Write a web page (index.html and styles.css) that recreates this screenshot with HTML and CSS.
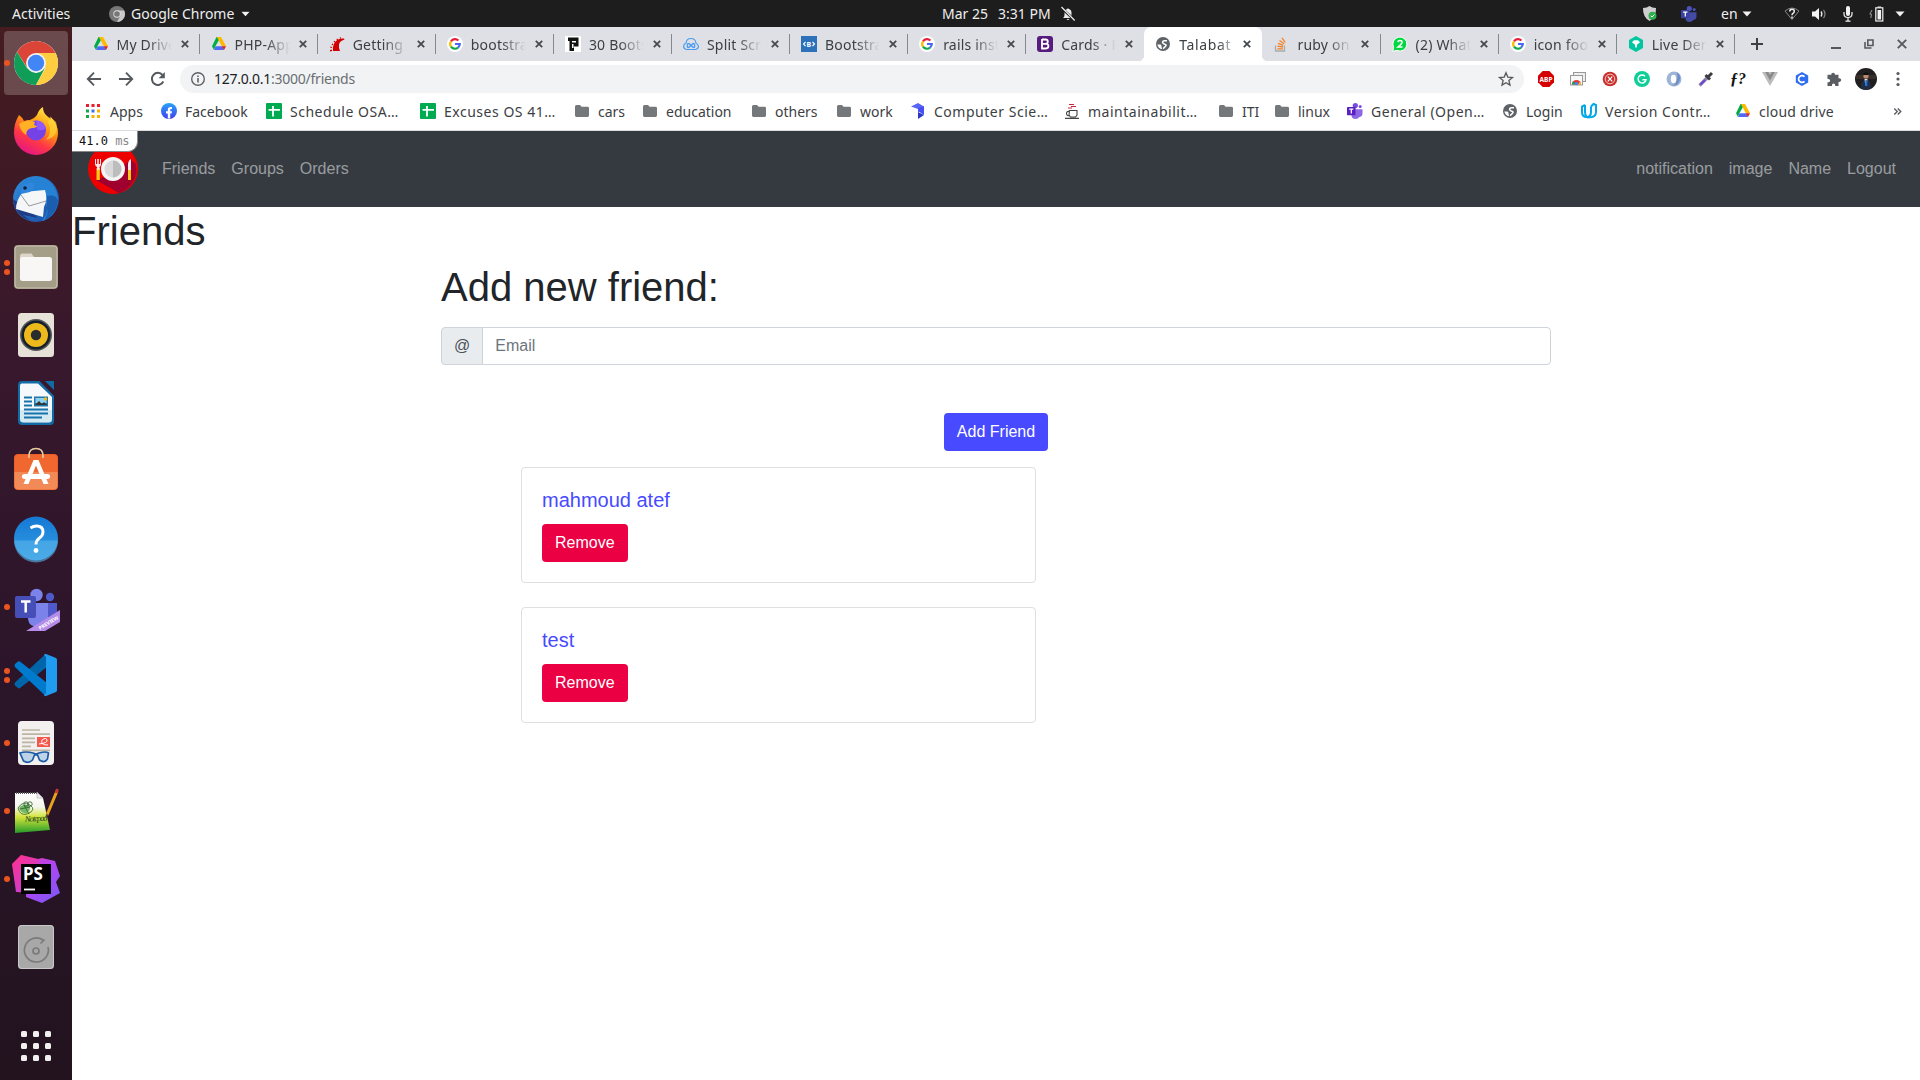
FILE: index.html
```html
<!DOCTYPE html>
<html lang="en">
<head>
<meta charset="utf-8">
<title>Talabat</title>
<link rel="stylesheet" href="styles.css">
</head>
<body>
<svg class="defs" width="0" height="0" aria-hidden="true">
  <defs>
    <linearGradient id="ffG" x1="0.8" y1="0" x2="0.3" y2="1"><stop offset="0" stop-color="#fff44f"/><stop offset=".4" stop-color="#ff980e"/><stop offset=".7" stop-color="#ff3647"/><stop offset="1" stop-color="#e31587"/></linearGradient>
    <linearGradient id="tbG" x1="0" y1="0" x2="1" y2="1"><stop offset="0" stop-color="#2f8fe0"/><stop offset="1" stop-color="#1b4aa0"/></linearGradient>
    <linearGradient id="helpG" x1="0" y1="0" x2="0" y2="1"><stop offset="0" stop-color="#1478d4"/><stop offset="1" stop-color="#35a0e4"/></linearGradient>
    <linearGradient id="psG" x1="0" y1="0" x2="1" y2="1"><stop offset="0" stop-color="#ff318c"/><stop offset=".5" stop-color="#b345f1"/><stop offset="1" stop-color="#765af8"/></linearGradient>
    <linearGradient id="grassG" x1="0" y1="0" x2="0" y2="1"><stop offset="0" stop-color="#fff"/><stop offset=".35" stop-color="#f4f6ec"/><stop offset=".6" stop-color="#d3e53a"/><stop offset="1" stop-color="#259b2a"/></linearGradient>
    <linearGradient id="fbG" x1="0" y1="0" x2="0" y2="1"><stop offset="0" stop-color="#2aa4f8"/><stop offset="1" stop-color="#3f3fee"/></linearGradient>
  </defs>
  <symbol id="drive" viewBox="0 0 16 16"><path fill="#00ac47" d="M5.5 1h4.2L4.4 10.2 3 14 1 10.3z"/><path fill="#ffba00" d="M6 1h4l5 9h-4.300z"/><path fill="#4f6cf7" d="M4.600 10.200h6.800L13 14H3z"/><path fill="#ea1d1d" d="M10.800 10.200H15L13 14z"/></symbol>
  <symbol id="google" viewBox="0 0 16 16"><circle cx="8" cy="8" r="8" fill="#fff"/><g fill="none" stroke-width="2.200"><path stroke="#ea1d3a" d="M4 5.300A4.800 4.800 0 0 1 11.400 4.600"/><path stroke="#fbbc05" d="M4 5.300a4.800 4.800 0 0 0 0 5.400"/><path stroke="#0faa45" d="M4 10.700a4.800 4.800 0 0 0 7 .9"/><path stroke="#4768f5" d="M8 8h4.800a4.800 4.800 0 0 1-1.800 3.600"/></g></symbol>
  <symbol id="globe" viewBox="0 0 16 16"><circle cx="8" cy="8" r="7" fill="#5f6368"/><path d="M12 4.800H9.500Q7.500 5 7.600 6.400T9.800 8.200 10.500 10.300 8 12.600" fill="none" stroke="#fff" stroke-width="1.500"/><path fill="#fff" d="M2.300 8.600h3.200q1.200.5 1 1.800l.6 2.800Q3.300 12.800 2.300 8.600z"/></symbol>
  <symbol id="close" viewBox="0 0 8 8"><path d="M.8.8l6.400 6.400M7.200.8L.8 7.200" stroke="#45494d" stroke-width="1.800"/></symbol>
  <symbol id="folder" viewBox="0 0 16 16"><path fill="#75787b" d="M1 3.500Q1 2 2.500 2H6l1.600 1.800h6q1.400 0 1.400 1.400v7.400q0 1.400-1.400 1.400H2.400Q1 14 1 12.600z"/></symbol>
  <symbol id="sheet" viewBox="0 0 16 16"><rect width="16" height="16" rx="1" fill="#00aa50"/><path d="M7 3v10.500M2.500 6.800h11.500" stroke="#fff" stroke-width="1.800"/></symbol>
  <symbol id="teams" viewBox="0 0 16 16"><circle cx="8.300" cy="2.600" r="2.600"/><circle cx="13.200" cy="3.500" r="1.500"/><path d="M6 6.200h9.500v4.300q0 3-3 3.500Q11 16 8.500 16 4.500 16 4.500 12z" opacity=".85"/><rect y="4" width="8.500" height="8.200" rx=".8" class="tm-box"/><path d="M2.200 6.200h4.200M4.300 6.200v4.300" stroke="#fff" stroke-width="1.200"/></symbol>
  <symbol id="caret" viewBox="0 0 10 6"><path d="M.5.500h9L5 5.500z" fill="#f2f2f2"/></symbol>
</svg>

<header class="topbar">
  <span class="tb-activities">Activities</span>
  <svg class="tb-app-icon" viewBox="0 0 16 16"><circle cx="8" cy="8" r="8" fill="#777"/><path fill="#c9c9c9" d="M8 4.500h7.200A8 8 0 0 1 8 16l3.300-6z"/><circle cx="8" cy="8" r="3.700" fill="#ddd"/><circle cx="8" cy="8" r="2.800" fill="#777"/></svg>
  <span class="tb-app">Google Chrome</span>
  <svg class="tb-caret" viewBox="0 0 10 6"><use href="#caret"/></svg>
  <div class="clock"><span class="date">Mar 25</span><span class="time">3:31 PM</span>
    <svg width="14" height="14" viewBox="0 0 14 14"><path fill="#eee" d="M2 11q1.500-1 1.500-3V6Q3.500 2.500 6.200 2q.8-1.600 1.600 0 2.700.5 2.700 4v2q0 2 1.500 3zM5.500 12h3q-1.500 2.200-3 0z"/><path d="M0 .5l14 13" stroke="#1d1d1d" stroke-width="2.500"/><path d="M.5 0L13.700 13.500" stroke="#eee" stroke-width="1.200"/></svg>
  </div>
  <div class="tray">
    <svg class="i-shield" viewBox="0 0 14 16"><path fill="#cfcfcf" d="M6.500 0Q9 2 13 2q.3 9-6.500 13Q-.3 11 0 2q4 0 6.500-2z"/><circle cx="9.500" cy="9.800" r="4" fill="#2eb04c"/><path d="M7.800 9.800l1.300 1.300 2.200-2.500" fill="none" stroke="#fff"/></svg>
    <svg class="i-teams" viewBox="0 0 16 16"><use href="#teams"/></svg>
    <span>en</span>
    <svg class="i-caret" viewBox="0 0 10 6"><use href="#caret"/></svg>
    <svg class="i-wifi" viewBox="0 0 16 14"><path d="M7.900 12.500L1 4Q8-2 15 4z" fill="none" stroke="#888"/><path d="M5.700 4.500q0-2.300 2.300-2.300t2.300 2q0 1.300-1.300 2.100-1 .7-1 2M8 9.500v2" fill="none" stroke="#eee" stroke-width="1.500"/></svg>
    <svg class="i-vol" viewBox="0 0 15 14"><path fill="#f2f2f2" d="M0 4.500h3L7 1v12L3 9.500H0z"/><path d="M9 4.500q1.800 2.500 0 5" fill="none" stroke="#eee" stroke-width="1.300"/><path d="M11.500 2.800q3 4.200 0 8.400" fill="none" stroke="#888" stroke-width="1.200"/></svg>
    <svg class="i-mic" viewBox="0 0 10 16"><rect x="3" y="0" width="4" height="10" rx="2" fill="#f2f2f2"/><path d="M1 6v2q0 3.500 4 3.500T9 8V6M5 11.500V15M2.500 15.200h5" fill="none" stroke="#f2f2f2" stroke-width="1.200"/></svg>
    <svg class="i-bat" viewBox="0 0 15 16"><path d="M3 4L.8 8.200h1.800L1.800 12" fill="none" stroke="#999"/><rect x="6.800" y="1.800" width="7" height="13.200" fill="none" stroke="#f2f2f2" stroke-width="1.200"/><rect x="8.500" y="4" width="3.600" height="9.500" fill="#f2f2f2"/><path d="M8.500 1h3.600" stroke="#f2f2f2"/></svg>
    <svg class="i-caret last" viewBox="0 0 10 6"><use href="#caret"/></svg>
  </div>
</header>

<div class="desktop">
<nav class="dock">
  <div class="app focused"><i class="dots"><b></b></i>
    <svg viewBox="0 0 48 48"><circle cx="24" cy="24" r="22" fill="#fff"/><path fill="#db4437" d="M24 14h19.600A22 22 0 0 0 5 13l10.300 16z"/><path fill="#0f9d58" d="M5 13a22 22 0 0 0 19 33l9-17-9 5-9-5z"/><path fill="#ffcd40" d="M43.600 14H24l9.500 15L24 46a22 22 0 0 0 19.600-32z"/><circle cx="24" cy="24" r="10" fill="#f1f1f1"/><circle cx="24" cy="24" r="8.200" fill="#4285f4"/></svg></div>
  <div class="app"><svg viewBox="0 0 48 48"><path fill="url(#ffG)" d="M7 8q3 2 5 6 3-1 6-1 4-1 7-5 2-6 6-8 0 6 4 9 3 2 4 4 0-3-1-4 8 8 8 17a22 22 0 0 1-44 0Q2 16 7 8z"/><circle cx="24" cy="23.500" r="10" fill="#7542e5"/><path fill="#9059ff" d="M24 13.500q8 0 10 8-4 3-9 1z"/><path fill="#ffb024" d="M7 17q9-6 16-2l-1 3 3 1q-1 2-5 2-6 1-6 7-5-3-7-11z"/><path fill="#ffd53a" d="M36 15q5 10-2 18 14-4 10-18l-6-5z" opacity=".7"/></svg></div>
  <div class="app"><svg viewBox="0 0 48 48"><circle cx="24" cy="24" r="23" fill="url(#tbG)"/><path fill="#1f3b86" d="M1 24q2 17 18 22l-8-6 15 3-8-7z"/><path fill="#2582d5" d="M10 10Q17-2 31 3q14 5 15 23-2 16-16 20 6-8 5-14-1-11-12-15l-11 3-3-2z"/><path fill="#f5f6f8" d="M11 17l22-2q3 9-1 17L31 42 4 34q0-9 7-17z"/><path d="M9 20l8 11 17-5" fill="none" stroke="#999"/><path fill="#1b5dae" d="M35 21q9-2 11 5-1 12-14 20 5-8 3-13z"/><path fill="#2f86dc" d="M10 11q6-5 12-3 2 5-4 9l-9 2z"/><circle cx="13" cy="13" r="1.800" fill="#123"/></svg></div>
  <div class="app"><i class="dots"><b></b><b></b></i><svg viewBox="0 0 48 48"><rect x="2" y="2" width="44" height="44" rx="4" fill="#979078"/><rect x="3" y="3" width="42" height="42" rx="3" fill="#a49d88" stroke="#c7c1ae"/><path fill="#ddd6c8" d="M8 13q0-2.500 2.500-2.500h9L22 14h13v8H8z"/><rect x="8" y="14" width="32" height="24" rx="2.500" fill="#f8f7f5"/></svg></div>
  <div class="app"><svg viewBox="0 0 48 48"><rect x="6" y="2" width="36" height="44" rx="3.500" fill="#e6e2d8"/><circle cx="24" cy="24" r="16" fill="#55585a"/><circle cx="24" cy="24" r="14.500" fill="#15202b"/><circle cx="24" cy="24" r="12" fill="#edb91d"/><circle cx="24" cy="24" r="5.200" fill="#2a2d2e"/></svg></div>
  <div class="app"><svg viewBox="0 0 48 48"><path fill="#136ba5" d="M10 2h17.500L42 17v25q0 4-4 4H10q-4 0-4-4V6q0-4 4-4zM33 2h9v9z"/><path fill="#f6f9fb" d="M9.500 4.500H26L40 18v22q0 3.500-3.500 3.500h-25Q8 43.500 8 40V7q0-2.500 1.500-2.500z"/><path fill="#88c4e2" d="M8 31h32v9q0 3.500-3.500 3.500h-25Q8 43.500 8 40z" opacity=".3"/><path d="M12 18.500h8M12 22.500h8M12 26.500h8M12 30.500h24M12 34.500h24M12 38.500h18" stroke="#1674ad" stroke-width="2"/><rect x="22" y="17.500" width="14" height="10" fill="#2377a6"/><path fill="#8ed0f0" d="M23.500 19h11v5h-11z"/><path fill="#333" d="M23 26l4-4 3 3 2-2 3 3z"/><circle cx="33.500" cy="20" r="1.700" fill="#f3ba25"/></svg></div>
  <div class="app"><svg viewBox="0 0 48 48"><rect x="2" y="7" width="44" height="36" rx="4" fill="#e95420"/><rect x="2.500" y="7.500" width="43" height="35" rx="4" fill="#f0682f"/><path fill="#f28a57" d="M2.500 25h43v13.500q0 4-4 4h-35q-4 0-4-4z"/><path d="M17 11V8.500q0-7 7-7t7 7V11" fill="none" stroke="#e7cda0" stroke-width="1.600"/><path fill="#fff" d="M21.500 13h5l10 24h-5L24 18.500 16.500 37h-5z"/><rect x="10" y="27" width="28" height="5" rx="2.500" fill="#fff"/></svg></div>
  <div class="app"><svg viewBox="0 0 48 48"><circle cx="24" cy="23.500" r="22" fill="url(#helpG)"/><path fill="#5ab4eb" opacity=".6" d="M2 25.500h44a22 22 0 0 1-44 0z"/><path d="M18.500 13q3-2 6-2 6.500 0 6.500 6 0 3.500-3.800 6.200-3.200 2.300-3.200 6.300" fill="none" stroke="#fff" stroke-width="2.900"/><circle cx="24" cy="35.500" r="2.400" fill="#fff"/></svg></div>
  <div class="app"><i class="dots"><b></b></i><svg viewBox="0 0 48 48"><circle cx="24.500" cy="12" r="6.200" fill="#7b83eb"/><circle cx="38" cy="14" r="4.200" fill="#5059c9"/><path fill="#5059c9" d="M34 20h11v12q0 8-11 8z"/><path fill="#7b83eb" d="M17 20h19v15q-1 9-10 9t-10-8z"/><path fill="#b48be8" d="M14 48L48 27v12L33 48z"/><rect x="3" y="13" width="21" height="22" rx="2" fill="#464eb8"/><path d="M9 18.500h9.500M13.700 18.500v11" stroke="#fff" stroke-width="2.500"/><text x="0" y="0" transform="translate(28 47) rotate(-31)" class="tiny">PREVIEW</text></svg></div>
  <div class="app"><i class="dots"><b></b><b></b></i><svg viewBox="0 0 48 48"><path fill="#0065a9" d="M3 31.500L33.500 3l1.500 13L8 37q-1 .8-2 0l-3-2.500q-1.200-1.500 0-3z"/><path fill="#007acc" d="M3 16q-1-1.500 0-3l3-2.500q1-.7 2 0L35 32l-1.500 13z"/><path fill="#1f9cf0" d="M34 3l10 4q1 .5 1 2v30q0 1.500-1 2l-10 4q-1.500.5-2-1l2-2V6l-2-2q.5-1.500 2-1z"/></svg></div>
  <div class="app"><i class="dots"><b></b></i><svg viewBox="0 0 48 48"><rect x="6" y="2" width="36" height="44" rx="4" fill="#f2f1ef"/><path d="M10 11h18M10 15.200h28M10 19.400h13M10 23.400h13M10 27.400h9M10 31.400h28" stroke="#bdb5a4" stroke-width="1.700"/><rect x="25" y="18" width="13" height="10" fill="#f4574b"/><path d="M27 25q9-1 8-4t-5 0q-2 5 6 5" fill="none" stroke="#fff"/><path d="M8 34q6-2 13 0l3 1 3-1q7-2 9.500 0l-1 6q-3 4.500-8 1l-2-5h-3l-2 5q-4 4-9 1z" fill="#a7c8e5" fill-opacity=".7" stroke="#1f5ca5" stroke-width="1.700"/></svg></div>
  <div class="app"><i class="dots"><b></b></i><svg viewBox="0 0 48 48"><path fill="url(#grassG)" d="M3 6h22l6 5 7 32L3 46z"/><path d="M4 6h22" stroke="#555" stroke-width="2" stroke-dasharray="1 1"/><path fill="#eee" stroke="#999" stroke-width=".5" d="M25 5v6h6z"/><path fill="#74b868" d="M7 21q4-5 9-3t-1 8q-6 1-8-5z"/><g fill="none" stroke="#2d5f28" stroke-width=".8"><path d="M6 21q5-8 12-3t-3 9q-7 2-9-6zM12 18l5 9M8 22l10-2"/><circle cx="14" cy="17" r="2.200"/><circle cx="18" cy="17" r="2.200"/></g><text x="13" y="35" class="script" transform="rotate(-4 13 35)">Notepad</text><path d="M35 28L45 4" stroke="#e9a21e" stroke-width="3"/><path d="M44 6l1.500-4" stroke="#c0392b" stroke-width="3"/><path d="M34 31l1-4" stroke="#553" stroke-width="1.500"/></svg></div>
  <div class="app"><i class="dots"><b></b></i><svg viewBox="0 0 48 48"><path fill="url(#psG)" d="M0 9l9-9 17 4 4-1 13 3 5 15-4 6 4 11-18 10-16-6v-5H4z"/><path fill="#ff318c" d="M0 9l9-9 17 4-1 7H9v27l-4-1z" opacity=".4"/><rect x="9" y="9" width="30" height="30" fill="#000"/><text x="11" y="25" class="ps">PS</text><path d="M12 34.500h11" stroke="#fff" stroke-width="1.800"/></svg></div>
  <div class="app"><svg viewBox="0 0 48 48"><rect x="6" y="2" width="36" height="44" rx="3.500" fill="#ababab"/><rect x="6.500" y="2.500" width="35" height="43" rx="3.500" fill="#a8a8a8" stroke="#c9c9c9"/><path d="M36 24a12 12 0 1 1-5-7M28.500 20.500l4-4" fill="none" stroke="#7a7a7a" stroke-width="1.700"/><circle cx="24" cy="28" r="3" fill="none" stroke="#7a7a7a" stroke-width="1.700"/></svg></div>
  <div class="show-apps"><i></i><i></i><i></i><i></i><i></i><i></i><i></i><i></i><i></i></div>
</nav>

<section class="browser">
  <div class="tabstrip">
    <div class="tab"><svg class="fav" viewBox="0 0 16 16"><use href="#drive"/></svg><span>My Drive</span><svg class="x" viewBox="0 0 8 8"><use href="#close"/></svg></div>
    <div class="tab"><svg class="fav" viewBox="0 0 16 16"><use href="#drive"/></svg><span>PHP-App</span><svg class="x" viewBox="0 0 8 8"><use href="#close"/></svg></div>
    <div class="tab"><svg class="fav" viewBox="0 0 16 16"><path fill="#d30001" d="M4 15q-.5-6 2.500-9.500T15 2.500l.5 1q-5 1.500-5.500 5T11 15zM1 14l2-.5V15l-2 .5zM1.500 10.500l1.500.4-.2 1.200-1.500-.3zM3.300 7.500l1.100.8-.7 1-1.200-.8zM5.500 4.800l.8 1-.9.700-.9-1zM8.500 2.600l.4 1.200-1 .4L7.400 3zM12 1.200v1.200l-1.200.1-.1-1.100z"/></svg><span>Getting</span><svg class="x" viewBox="0 0 8 8"><use href="#close"/></svg></div>
    <div class="tab"><svg class="fav" viewBox="0 0 16 16"><use href="#google"/></svg><span>bootstra</span><svg class="x" viewBox="0 0 8 8"><use href="#close"/></svg></div>
    <div class="tab"><svg class="fav" viewBox="0 0 16 16"><rect width="16" height="16" fill="#fff"/><path fill="#111" d="M3 1.500h10.500v9H9V15H4.500V5H3zM7 5v1.500h4V5zM7 8v4h1.500V8z"/></svg><span>30 Boots</span><svg class="x" viewBox="0 0 8 8"><use href="#close"/></svg></div>
    <div class="tab"><svg class="fav" viewBox="0 0 16 16"><path d="M3.500 13.500Q.5 13 .6 10.300.8 8 3 7.200 3.500 2.500 8 2.500t5 4.700q2.300.8 2.400 3.100.1 2.700-2.900 3.200z" fill="none" stroke="#4c9cf0" stroke-width="1.200"/><path d="M8 9.500Q4.500 5.500 4.300 9.500T8 9.500q3.500-4 3.700 0T8 9.500z" fill="none" stroke="#4c9cf0" stroke-width="1.300"/></svg><span>Split Scr</span><svg class="x" viewBox="0 0 8 8"><use href="#close"/></svg></div>
    <div class="tab"><svg class="fav" viewBox="0 0 16 16"><rect width="16" height="16" fill="#2d72b8"/><path d="M4.500 6L2.500 8l2 2M11.500 6l2 2-2 2" fill="none" stroke="#fff" stroke-width="1.100"/><text x="8" y="10.500" class="favtxt">B</text></svg><span>Bootstra</span><svg class="x" viewBox="0 0 8 8"><use href="#close"/></svg></div>
    <div class="tab"><svg class="fav" viewBox="0 0 16 16"><use href="#google"/></svg><span>rails inst</span><svg class="x" viewBox="0 0 8 8"><use href="#close"/></svg></div>
    <div class="tab before-active"><svg class="fav" viewBox="0 0 16 16"><rect width="16" height="16" rx="3" fill="#561b7e"/><path d="M5 3.500h3.600q2.200 0 2.200 2.100T8.600 7.800H5m0 0h4q2.400 0 2.400 2.300T9 12.500H5zM5 3v10" fill="none" stroke="#fff" stroke-width="1.800"/></svg><span>Cards · B</span><svg class="x" viewBox="0 0 8 8"><use href="#close"/></svg></div>
    <div class="tab active"><svg class="fav" viewBox="0 0 16 16"><use href="#globe"/></svg><span>Talabat</span><svg class="x" viewBox="0 0 8 8"><use href="#close"/></svg></div>
    <div class="tab"><svg class="fav" viewBox="0 0 16 16"><path d="M2.500 9.500V15h9V9.500" fill="none" stroke="#aaa" stroke-width="1.300"/><path d="M4.300 12.800h5.600M4.400 10.200l5.600.8M5 7.400l5.300 1.900M6.500 4.500l4.600 3.300M9 1.800l3.300 4.700" stroke="#f58025" stroke-width="1.300"/></svg><span>ruby on</span><svg class="x" viewBox="0 0 8 8"><use href="#close"/></svg></div>
    <div class="tab"><svg class="fav" viewBox="0 0 16 16"><path fill="#00d741" stroke="#fff" d="M.7 15.300l1-4A7 7 0 1 1 5 14.400z"/><path d="M5.800 6.200Q6 4.500 8 4.500t2.100 1.700Q10.100 7.500 6 11h4.500" fill="none" stroke="#fff" stroke-width="1.500"/></svg><span>(2) What</span><svg class="x" viewBox="0 0 8 8"><use href="#close"/></svg></div>
    <div class="tab"><svg class="fav" viewBox="0 0 16 16"><use href="#google"/></svg><span>icon foo</span><svg class="x" viewBox="0 0 8 8"><use href="#close"/></svg></div>
    <div class="tab"><svg class="fav" viewBox="0 0 16 16"><path fill="#00c7a0" d="M8 0l7 4v8l-7 4-7-4V4z"/><path fill="#fff" d="M4 6.200L6 4.300h4l2 1.900-3 2.600v2L8 12l-1-1.200v-2z"/></svg><span>Live Dem</span><svg class="x" viewBox="0 0 8 8"><use href="#close"/></svg></div>
    <svg class="newtab" viewBox="0 0 12 12"><path d="M6 0v12M0 6h12" stroke="#3c4043" stroke-width="2"/></svg>
    <div class="winbtns">
      <svg width="10" height="12" viewBox="0 0 10 12"><path d="M0 10h10" stroke="#55595d" stroke-width="2"/></svg>
      <svg width="10" height="10" viewBox="0 0 10 10"><path d="M3.800 1H9v5.500H3.800zM1 3v6h6.500" fill="none" stroke="#55595d" stroke-width="1.600"/></svg>
      <svg width="10" height="10" viewBox="0 0 10 10"><path d="M.8.8l8.400 8.400M9.200.8L.8 9.200" stroke="#55595d" stroke-width="1.900"/></svg>
    </div>
  </div>

  <div class="toolbar">
    <svg class="nav-btn" viewBox="0 0 16 16"><path d="M15 8H2M8 1.700L1.800 8 8 14.300" fill="none" stroke="#55595e" stroke-width="1.900"/></svg>
    <svg class="nav-btn" viewBox="0 0 16 16"><path d="M1 8h13M8 1.700L14.200 8 8 14.300" fill="none" stroke="#55595e" stroke-width="1.900"/></svg>
    <svg class="nav-btn" viewBox="0 0 16 16"><path d="M13.300 10.500A6 6 0 1 1 12.500 4" fill="none" stroke="#55595e" stroke-width="2"/><path d="M14.800 1v6.200H8.600z" fill="#55595e"/></svg>
    <div class="omnibox">
      <svg width="16" height="16" viewBox="0 0 16 16"><circle cx="8" cy="8" r="6.300" fill="none" stroke="#5f6368" stroke-width="1.400"/><path d="M8 7v4.500M8 4.500v1.600" stroke="#5f6368" stroke-width="1.600"/></svg>
      <span class="url"><b>127.0.0.1</b>:3000/friends</span>
      <svg class="star" viewBox="0 0 16 16"><path d="M8 1.800l1.800 4.300 4.700.4-3.600 3 1.100 4.600L8 11.700l-4 2.400 1.100-4.600-3.600-3 4.700-.4z" fill="none" stroke="#55595e" stroke-width="1.300"/></svg>
    </div>
    <div class="exts">
      <svg viewBox="0 0 16 16"><path fill="#d70000" d="M4.700 0h6.600L16 4.700v6.600L11.300 16H4.700L0 11.300V4.700z"/><text x="8" y="10.500" class="abp">ABP</text></svg>
      <svg viewBox="0 0 16 16"><rect x="3.500" y="1.500" width="12" height="9" fill="#eee" stroke="#999"/><rect x=".5" y="4.500" width="12" height="9.500" fill="#f8f8f8" stroke="#999"/><path fill="#e33b2e" d="M2 13.500a4.500 4.500 0 0 1 9 0z"/><path fill="#1c9d55" d="M2 13.500q0-2 1.300-3.200L5.500 13.500z"/><path fill="#f9c72d" d="M11 13.500q0-1.500-1-2.800l-2 2.800z"/><circle cx="6.500" cy="12.500" r="1.700" fill="#4285f4"/></svg>
      <svg viewBox="0 0 16 16"><circle cx="8" cy="8" r="7.300" fill="#c9302c"/><circle cx="8" cy="8" r="4.800" fill="none" stroke="#f3c8c6"/><path d="M5.800 10.400l4.400-4.800M10.200 10.400L5.800 5.600" stroke="#fff" stroke-width="1.200"/></svg>
      <svg viewBox="0 0 16 16"><circle cx="8" cy="8" r="8" fill="#11ce98"/><path d="M11 5.200A4 4 0 1 0 12 8.800H8.500" fill="none" stroke="#fff" stroke-width="1.400"/></svg>
      <svg viewBox="0 0 16 16"><circle cx="8" cy="8" r="7.500" fill="#9db5d8"/><path fill="#6f8fc4" d="M11 1.200a7.500 7.500 0 0 1-5 13.500Q13 12 11 1.200z"/><ellipse cx="7.500" cy="8" rx="2.700" ry="4.200" fill="#fff"/></svg>
      <svg viewBox="0 0 16 16"><path d="M1.500 14.500L9 7" stroke="#8c84a5" stroke-width="3.200"/><path d="M2.500 13.500L7 9" stroke="#6f3fd8" stroke-width="1.800"/><path d="M7.500 4l4.500 4.500M10 6l4-4" stroke="#3b3d40" stroke-width="3"/></svg>
      <svg viewBox="0 0 16 16"><text x="8" y="13" class="fq">ƒ?</text></svg>
      <svg viewBox="0 0 16 16"><path fill="#bcbcbc" d="M0 1h16L8 15z"/><path fill="#8a8a8a" d="M3.200 1h3L8 4l1.800-3h3L8 9.400z"/></svg>
      <svg viewBox="0 0 16 16"><path fill="#2f6ef2" d="M8 1l6.200 3.500v7L8 15l-6.200-3.500v-7z"/><path d="M10.500 5.700A3.400 3.400 0 1 0 10.500 10.300" fill="none" stroke="#fff" stroke-width="1.700"/></svg>
      <svg viewBox="0 0 16 16"><path fill="#5a5e63" d="M5.200 3.700a1.900 1.900 0 1 1 3.800 0h3.500v3.600h.9a1.800 1.800 0 1 1 0 3.600h-.9V15H9.200v-1a1.600 1.600 0 0 0-3.200 0v1H1.500v-3.800h1a1.600 1.600 0 0 0 0-3.200h-1V3.700z"/></svg>
      <svg class="avatar" viewBox="0 0 22 22"><circle cx="11" cy="11" r="11" fill="#211f20"/><path fill="#382f2b" d="M1 7h20v4H1z"/><path fill="#222d48" d="M6 19q0-7 5-7t5 7l-2 2.500H8z"/><circle cx="11" cy="8" r="2.600" fill="#bb8b70"/><path fill="#dde" d="M9.500 11h3l-.7 6h-1.500z"/><path fill="#1675d9" d="M10.400 12h1.400l.7 6h-2.500z"/><path fill="#111" d="M8.300 7q0-2.500 2.700-2.500T13.700 7z"/></svg>
      <svg class="menu" viewBox="0 0 16 16"><g fill="#55595e"><circle cx="8" cy="2.500" r="1.600"/><circle cx="8" cy="8" r="1.600"/><circle cx="8" cy="13.500" r="1.600"/></g></svg>
    </div>
  </div>

  <div class="bookmarks">
    <a style="width:76px"><svg viewBox="0 0 16 16"><g><path fill="#ea1d2c" d="M1 1h3v3H1zM6.500 1h3v3h-3zM12 1h3v3h-3z"/><path fill="#0fa84c" d="M1 6.500h3v3H1zM1 12h3v3H1z"/><path fill="#3f6ff2" d="M6.500 6.500h3v3h-3z"/><path fill="#f5b400" d="M12 6.500h3v3h-3zM6.500 12h3v3h-3zM12 12h3v3h-3z"/></g></svg><span class="apps">Apps</span></a>
    <a style="width:105px"><svg viewBox="0 0 16 16"><circle cx="8" cy="8" r="8" fill="url(#fbG)"/><path fill="#fff" d="M6.800 15.500v-5H5V8.300h1.800V6.800Q6.800 4 9.500 4l1.500.1v2H10Q9.200 6 9.200 7v1.300H11l-.4 2.200H9.200v5z"/></svg>Facebook</a>
    <a class="cut" style="width:154px"><svg viewBox="0 0 16 16"><use href="#sheet"/></svg>Schedule OSA…</a>
    <a class="cut" style="width:154px"><svg viewBox="0 0 16 16"><use href="#sheet"/></svg>Excuses OS 41…</a>
    <a style="width:68px"><svg viewBox="0 0 16 16"><use href="#folder"/></svg>cars</a>
    <a style="width:109px"><svg viewBox="0 0 16 16"><use href="#folder"/></svg>education</a>
    <a style="width:85px"><svg viewBox="0 0 16 16"><use href="#folder"/></svg>others</a>
    <a style="width:74px"><svg viewBox="0 0 16 16"><use href="#folder"/></svg>work</a>
    <a class="cut" style="width:154px"><svg viewBox="0 0 16 16"><path fill="#5865f7" d="M1 3.500L8 0l6 3.500v4L8 9V6z"/><path fill="#4650f0" d="M8 5l6-1.500V12L8 8z"/><path fill="#2b36c9" d="M8 9l6 3-6 4z"/></svg>Computer Scie…</a>
    <a class="cut" style="width:154px"><svg viewBox="0 0 16 16"><path d="M5 1.500h5M7 3.500h5M4 5h4" stroke="#d0233c" stroke-width="1.200"/><path d="M5.500 7.500h7.500v4.500l-1.500 2h-5L5 12zM5.300 8.500Q2.500 8 2.500 10.500t3 2M1 15.400h14" fill="none" stroke="#444" stroke-width="1.100"/></svg>maintainabilit…</a>
    <a style="width:56px"><svg viewBox="0 0 16 16"><use href="#folder"/></svg>ITI</a>
    <a style="width:73px"><svg viewBox="0 0 16 16"><use href="#folder"/></svg>linux</a>
    <a class="cut" style="width:155px"><svg class="tm-purple" viewBox="0 0 16 16"><use href="#teams"/></svg>General (Open…</a>
    <a style="width:79px"><svg viewBox="0 0 16 16"><use href="#globe"/></svg>Login</a>
    <a class="cut" style="width:154px"><svg viewBox="0 0 16 16"><path d="M4 2L1 3.500V9q0 5 4.500 5T10 9V3.500M4 2v7q0 3 1.500 5M10 3.500L12.500 1 15 2v7q0 4-4 5l-5 .5" fill="none" stroke="#02a8e8" stroke-width="2"/></svg>Version Contr…</a>
    <a class="wide" style="width:100px"><svg viewBox="0 0 16 16"><use href="#drive"/></svg>cloud drive</a>
    <svg class="more" viewBox="0 0 8 7"><path d="M.8.500l3 3-3 3M4.300.500l3 3-3 3" fill="none" stroke="#55595e" stroke-width="1.300"/></svg>
  </div>

  <main class="page">
    <div class="profiler">41.0 <span>ms</span></div>
    <nav class="navbar">
      <svg class="brand" viewBox="0 0 50 50"><circle cx="25" cy="25" r="25" fill="#ee0000"/><path fill="#a0002e" d="M43 16l4.800 4A25 25 0 0 1 31 49L8 36l12-4z"/><path fill="#ffc61a" d="M8.500 24h3.300v12H8.500zM40 24h3v12h-3z"/><path fill="#f3e9ea" d="M7 15h1v5h1.200v-5h1.600v5H12v-5h1v6q-1 2-1.500 2v3H9v-3q-2-1-2-3zM40 26V20q.5-4 3-5v11z"/><circle cx="25" cy="25" r="12" fill="#f4f4f4"/><circle cx="25" cy="25" r="8.500" fill="#dadada"/><path fill="#bdbdbd" d="M25 16.500a8.500 8.500 0 0 1 0 17z"/></svg>
      <a>Friends</a><a>Groups</a><a>Orders</a>
      <div class="right"><a>notification</a><a>image</a><a>Name</a><a>Logout</a></div>
    </nav>
    <h1>Friends</h1>
    <div class="container">
      <h1>Add new friend:</h1>
      <div class="input-group"><span class="addon">@</span><input type="text" placeholder="Email"></div>
      <button class="btn primary">Add Friend</button>
      <div class="cards">
        <div class="card"><h5>mahmoud atef</h5><button class="btn danger">Remove</button></div>
        <div class="card"><h5>test</h5><button class="btn danger">Remove</button></div>
      </div>
    </div>
  </main>
</section>
</div>
</body>
</html>
```
FILE: styles.css
```css
* { box-sizing: border-box; }
body { margin: 0; width: 1920px; height: 1080px; overflow: hidden; background: #fff; font-family: "Noto Sans", sans-serif; }
svg { display: block; flex: none; overflow: visible; }
.defs { position: absolute; }

/* system bar */
.topbar { height: 27px; background: #1d1d1d; color: #eee; display: flex; align-items: center; font-size: 14px; position: relative; }
.topbar > span, .tray span, .clock span { white-space: nowrap; }
.tb-activities { width: 97px; padding-left: 12px; }
.tb-app-icon { width: 16px; height: 16px; margin-left: 12px; }
.tb-app { margin-left: 6px; width: 110px; }
.tb-caret { width: 9px; height: 6px; }
.clock { display: flex; align-items: center; position: absolute; left: 942px; height: 26px; }
.date { width: 56px; }
.time { width: 63px; }
.tray { margin-left: auto; display: flex; align-items: center; }
.i-shield { width: 14px; height: 16px; margin-right: 24px; }
.i-teams { width: 16px; height: 16px; margin-right: 24px; fill: #4b53bc; --box: #3a41a0; }
.tray span { width: 21px; }
.i-caret { width: 10px; height: 6px; margin-right: 32px; }
.i-wifi { width: 16px; height: 14px; margin-right: 12px; }
.i-vol { width: 15px; height: 14px; margin-right: 16px; }
.i-mic { width: 10px; height: 16px; margin-right: 16px; }
.i-bat { width: 15px; height: 16px; margin-right: 11px; }
.i-caret.last { margin-right: 15px; }
.tm-box { fill: var(--box); }

.desktop { display: flex; height: 1053px; }

/* dock */
.dock { width: 72px; padding: 4px 4px 0; display: flex; flex-direction: column; gap: 4px; background: linear-gradient(#451c1f, #38182c 30%, #2c152a 60%, #22131f); }
.app { height: 64px; border-radius: 4px; display: flex; align-items: center; justify-content: center; position: relative; flex: none; }
.app > svg { width: 48px; height: 48px; }
.focused { background: #6a4a4c; }
.dots { position: absolute; left: 0; top: 0; height: 64px; display: flex; flex-direction: column; justify-content: center; gap: 3px; }
.dots b { width: 6px; height: 6px; border-radius: 50%; background: #e95420; }
.tiny { fill: #fff; font: bold 5px "Noto Sans", sans-serif; }
.script { fill: #26401f; font: italic 8.500px "Liberation Serif", serif; letter-spacing: -1px; }
.ps { fill: #fff; font: bold 17px "Noto Sans", sans-serif; }
.show-apps { display: grid; grid-template-columns: repeat(3, 6px); gap: 6px; margin: 48px 0 0 17px; }
.show-apps i { width: 6px; height: 6px; border-radius: 1.5px; background: #f2f0ef; }

/* browser chrome */
.browser { width: 1848px; display: flex; flex-direction: column; }
.tabstrip { height: 34px; background: #dee0e6; display: flex; align-items: center; padding-left: 9.500px; }
.tab { width: 118.1px; height: 34px; display: flex; align-items: center; padding-left: 11px; position: relative; color: #3c4043; font-size: 14px; letter-spacing: .2px; flex: none; }
.tab::after { content: ""; position: absolute; right: 0; top: 7px; width: 1px; height: 20px; background: #85888d; }
.before-active::after, .active::after { display: none; }
.tab span { width: 56px; margin-left: 8px; overflow: hidden; white-space: nowrap; -webkit-mask-image: linear-gradient(90deg, #000 55%, transparent 98%); mask-image: linear-gradient(90deg, #000 55%, transparent 98%); }
.fav { width: 16px; height: 16px; }
.x { width: 8px; height: 8px; margin-left: 8px; }
.active { background: #fff; border-radius: 7px 7px 0 0; }
.active::before { content: ""; position: absolute; left: -6px; right: -6px; bottom: 0; height: 6px; background: radial-gradient(circle at 0 0, transparent 6px, #fff 6.500px) left / 6px 6px no-repeat, radial-gradient(circle at 100% 0, transparent 6px, #fff 6.500px) right / 6px 6px no-repeat; }
.active span { letter-spacing: .6px; -webkit-mask-image: linear-gradient(90deg, #000 70%, transparent 105%); mask-image: linear-gradient(90deg, #000 70%, transparent 105%); }
.favtxt { fill: #fff; font: bold 7px "Noto Sans", sans-serif; text-anchor: middle; }
.newtab { width: 12px; height: 12px; margin-left: 16px; }
.winbtns { margin-left: auto; display: flex; align-items: center; gap: 23px; padding-right: 13px; }

.toolbar { height: 36px; display: flex; align-items: center; padding-left: 14px; gap: 16px; }
.nav-btn { width: 16px; height: 16px; }
.omnibox { width: 1344px; height: 28px; margin-left: -2px; border-radius: 14px; background: #f1f3f4; display: flex; align-items: center; padding: 0 10px; }
.url { margin-left: 8px; padding-bottom: 1px; font-size: 14px; color: #6a6e73; letter-spacing: -.25px; }
.url b { font-weight: 400; color: #202124; }
.star { width: 16px; height: 16px; margin-left: auto; }
.exts { display: flex; align-items: center; gap: 16px; margin-left: -2px; }
.exts svg { width: 16px; height: 16px; }
.exts .avatar { width: 22px; height: 22px; margin: 0 -3px; }
.abp { fill: #fff; font: bold 6.500px "Noto Sans", sans-serif; text-anchor: middle; }
.fq { fill: #111; font: italic bold 16px "Liberation Serif", serif; text-anchor: middle; }

.bookmarks { height: 34px; display: flex; align-items: center; padding: 0 0 5px 13px; border-bottom: 1px solid #d9dbdf; color: #3c4043; font-size: 14px; }
.bookmarks a { display: flex; align-items: center; gap: 8px; white-space: nowrap; flex: none; }
.bookmarks a svg { width: 16px; height: 16px; }
.bookmarks .cut { letter-spacing: .52px; }
.bookmarks .wide { letter-spacing: .2px; }
.apps { margin-left: 1px; }
.bookmarks .tm-purple { fill: #7a4be0; --box: #5a1fc0; }
.more { width: 9px; height: 7px; margin: 0 18px 0 auto; }

/* page */
.page { flex: 1; position: relative; font: 16px/1.5 "Liberation Sans", Arial, sans-serif; color: #212529; }
.profiler { position: absolute; left: 0; top: 0; width: 66px; height: 21px; padding-left: 7px; background: #fff; border-radius: 0 0 10px 0; border-right: 1px solid #888; border-bottom: 1px solid #888; font: 12px/20px "DejaVu Sans Mono", monospace; color: #111; white-space: nowrap; }
.profiler span { color: #888; }
.navbar { height: 76px; background: #343a40; display: flex; align-items: center; padding: 0 16px; color: rgba(255, 255, 255, .5); }
.navbar a { padding: 0 8px; }
.brand { width: 50px; height: 50px; margin-right: 16px; }
.right { display: flex; margin-left: auto; }
h1 { font-size: 40px; line-height: 48px; font-weight: 400; margin: 0 0 8px; }
.container { width: 1110px; margin: 0 auto; display: flex; flex-direction: column; }
.container h1 { margin-bottom: 16px; }
.input-group { display: flex; height: 38px; margin-bottom: 48px; }
.addon { background: #e9ecef; border: 1px solid #ced4da; border-radius: 4px 0 0 4px; padding: 6px 12px; line-height: 24px; color: #495057; }
.input-group input { flex: 1; margin-left: -1px; border: 1px solid #ced4da; border-radius: 0 4px 4px 0; padding: 6px 12px; font: 16px/24px "Liberation Sans", Arial, sans-serif; background: #fff; }
.input-group input::placeholder { color: #6c757d; opacity: 1; }
.btn { border: 1px solid transparent; border-radius: 4px; height: 38px; padding: 6px 12px; font: 16px/24px "Liberation Sans", Arial, sans-serif; color: #fff; }
.primary { background: #474aff; align-self: center; }
.danger { background: #ea0043; }
.cards { display: flex; flex-direction: column; gap: 24px; margin: 16px 0 0 80px; width: 515px; }
.card { border: 1px solid #dfdfdf; border-radius: 4px; padding: 20px; height: 116px; }
h5 { margin: 0 0 12px; font-size: 20px; line-height: 24px; font-weight: 400; color: #474aff; }
.card .btn { display: block; }
```
